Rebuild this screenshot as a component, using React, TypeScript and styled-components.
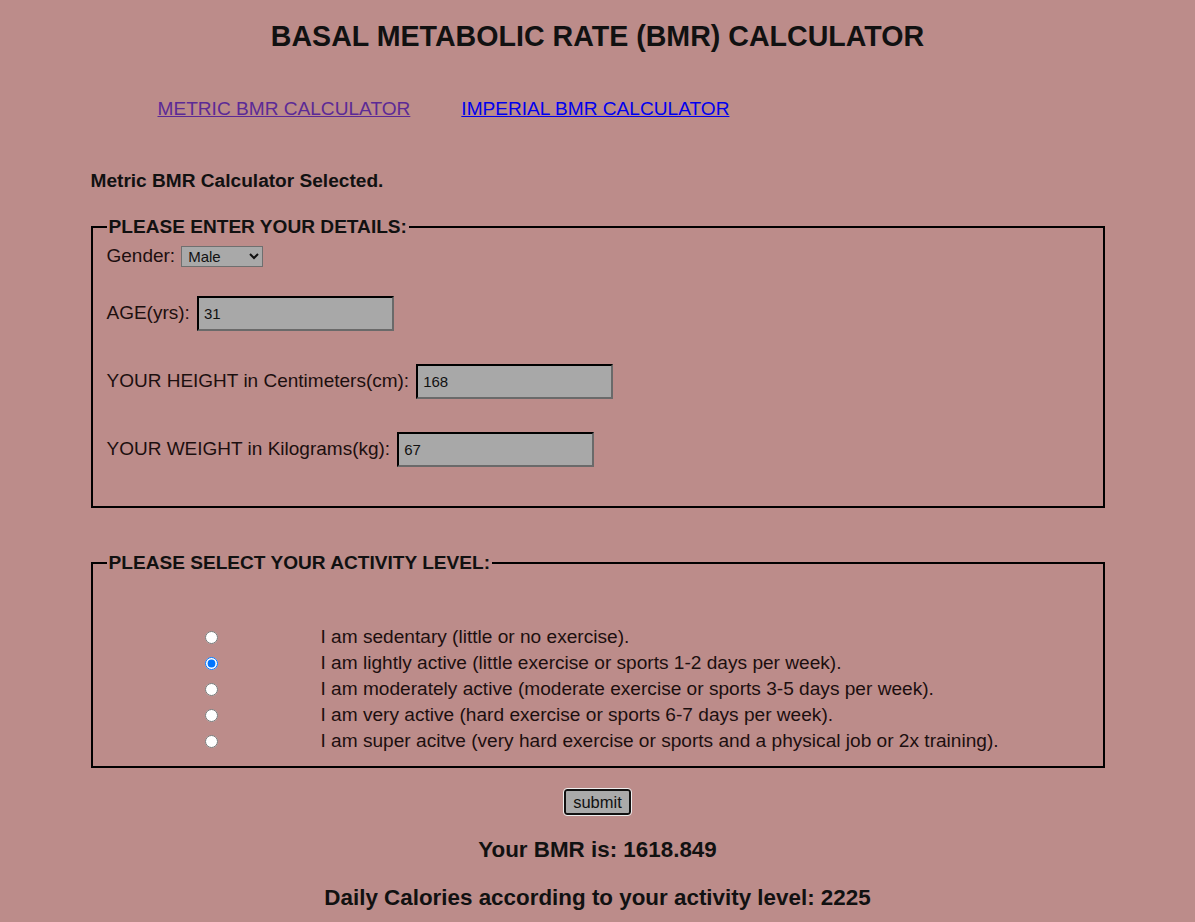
import React from 'react';
import styled, { createGlobalStyle } from 'styled-components';

const GlobalStyle = createGlobalStyle`
    body {
        margin: 0;
        background: #bc8c8a;
        font-family: "Liberation Sans", Arial, sans-serif;
        color: #1c0f0f;
    }
`;

const activities = [
    'I am sedentary (little or no exercise).',
    'I am lightly active (little exercise or sports 1-2 days per week).',
    'I am moderately active (moderate exercise or sports 3-5 days per week).',
    'I am very active (hard exercise or sports 6-7 days per week).',
    'I am super acitve (very hard exercise or sports and a physical job or 2x training).',
];

const App = () => {
    return (
        <Page>
            <GlobalStyle />
            <Title>BASAL METABOLIC RATE (BMR) CALCULATOR</Title>
            <Nav>
                <NavLink href="#metric" $visited>METRIC BMR CALCULATOR</NavLink>
                <NavLink href="#imperial">IMPERIAL BMR CALCULATOR</NavLink>
            </Nav>
            <Selected>Metric BMR Calculator Selected.</Selected>

            <Fieldset>
                <Legend>PLEASE ENTER YOUR DETAILS:</Legend>
                <GenderRow>
                    Gender:
                    <Select defaultValue="Male">
                        <option>Male</option>
                        <option>Female</option>
                    </Select>
                </GenderRow>
                <FieldRow>
                    AGE(yrs):
                    <TextInput defaultValue="31" />
                </FieldRow>
                <FieldRow>
                    YOUR HEIGHT in Centimeters(cm):
                    <TextInput defaultValue="168" />
                </FieldRow>
                <FieldRow>
                    YOUR WEIGHT in Kilograms(kg):
                    <TextInput defaultValue="67" />
                </FieldRow>
            </Fieldset>

            <ActivityFieldset>
                <Legend>PLEASE SELECT YOUR ACTIVITY LEVEL:</Legend>
                <ActivityList>
                    {activities.map((text, i) => (
                        <ActivityRow key={text}>
                            <RadioCell>
                                <Radio type="radio" name="activity" defaultChecked={i === 1} />
                            </RadioCell>
                            <span>{text}</span>
                        </ActivityRow>
                    ))}
                </ActivityList>
            </ActivityFieldset>

            <SubmitWrap>
                <SubmitButton>submit</SubmitButton>
            </SubmitWrap>
            <Result>Your BMR is: 1618.849</Result>
            <Result>Daily Calories according to your activity level: 2225</Result>
        </Page>
    );
};

const Page = styled.div`
    width: 1014px;
    margin: 0 auto;
    padding: 19px 0 0 0;
    display: flex;
    flex-flow: column;
`

const Title = styled.h1`
    margin: 0;
    text-align: center;
    font-size: 28.6px;
    font-weight: bold;
    color: #111;
    line-height: 34px;
`

const Nav = styled.div`
    display: flex;
    gap: 51px;
    padding-left: 67px;
    margin-top: 45px;
`

const NavLink = styled.a<{ $visited?: boolean }>`
    font-size: 19.1px;
    line-height: 22px;
    color: ${p => (p.$visited ? '#5b2a96' : '#0000ee')};
`

const Selected = styled.div`
    margin-top: 50px;
    font-size: 19.1px;
    font-weight: bold;
    color: #111;
    line-height: 22px;
`

const Fieldset = styled.fieldset`
    margin: 25px 0 0 0;
    padding: 0 14px 40px 14px;
    border: 2px solid #000;
    font-size: 19px;
    min-width: 0;
`

const ActivityFieldset = styled(Fieldset)`
    margin-top: 45px;
    padding-bottom: 12px;
`

const Legend = styled.legend`
    font-weight: bold;
    font-size: 19.1px;
    color: #111;
    padding: 0 2px;
    line-height: 20px;
`

const GenderRow = styled.label`
    display: flex;
    align-items: center;
    gap: 6px;
    height: 22px;
    margin-top: 8px;
`

const FieldRow = styled.label`
    display: flex;
    align-items: center;
    gap: 7px;
    height: 34px;
    margin-top: 34px;
    &:nth-of-type(2) {
        margin-top: 29px;
    }
`

const Select = styled.select`
    width: 82px;
    height: 21px;
    background: #a9a9a9;
    border: 1px solid #6f6f6f;
    font-family: "Liberation Sans", Arial, sans-serif;
    font-size: 15px;
    color: #111;
    padding: 0 2px;
`

const TextInput = styled.input`
    box-sizing: border-box;
    width: 197px;
    height: 35px;
    background: #a8a8a8;
    border: 2px inset #767676;
    border-color: #222 #6a6a6a #6a6a6a #222;
    font-family: "Liberation Sans", Arial, sans-serif;
    font-size: 15px;
    color: #111;
    padding: 0 5px;
`

const ActivityList = styled.div`
    display: flex;
    flex-flow: column;
    margin-top: 51px;
`

const ActivityRow = styled.label`
    display: flex;
    align-items: center;
    height: 26px;
    font-size: 19.1px;
`

const RadioCell = styled.span`
    width: 214px;
    padding-left: 98px;
    box-sizing: border-box;
    display: flex;
`

const Radio = styled.input`
    margin: 0;
    width: 13px;
    height: 13px;
`

const SubmitWrap = styled.div`
    display: flex;
    justify-content: center;
    margin-top: 21px;
`

const SubmitButton = styled.button`
    font-family: "Liberation Sans", Arial, sans-serif;
    font-size: 16.5px;
    color: #111;
    background: #aaa;
    border: 2px solid #111;
    border-radius: 3px;
    outline: 1px solid #eee;
    padding: 2px 7px;
    height: 26px;
`

const Result = styled.div`
    text-align: center;
    font-size: 22.4px;
    font-weight: bold;
    color: #111;
    margin-top: 23px;
    line-height: 24px;
    & + & {
        margin-top: 24px;
    }
`

export default App;
